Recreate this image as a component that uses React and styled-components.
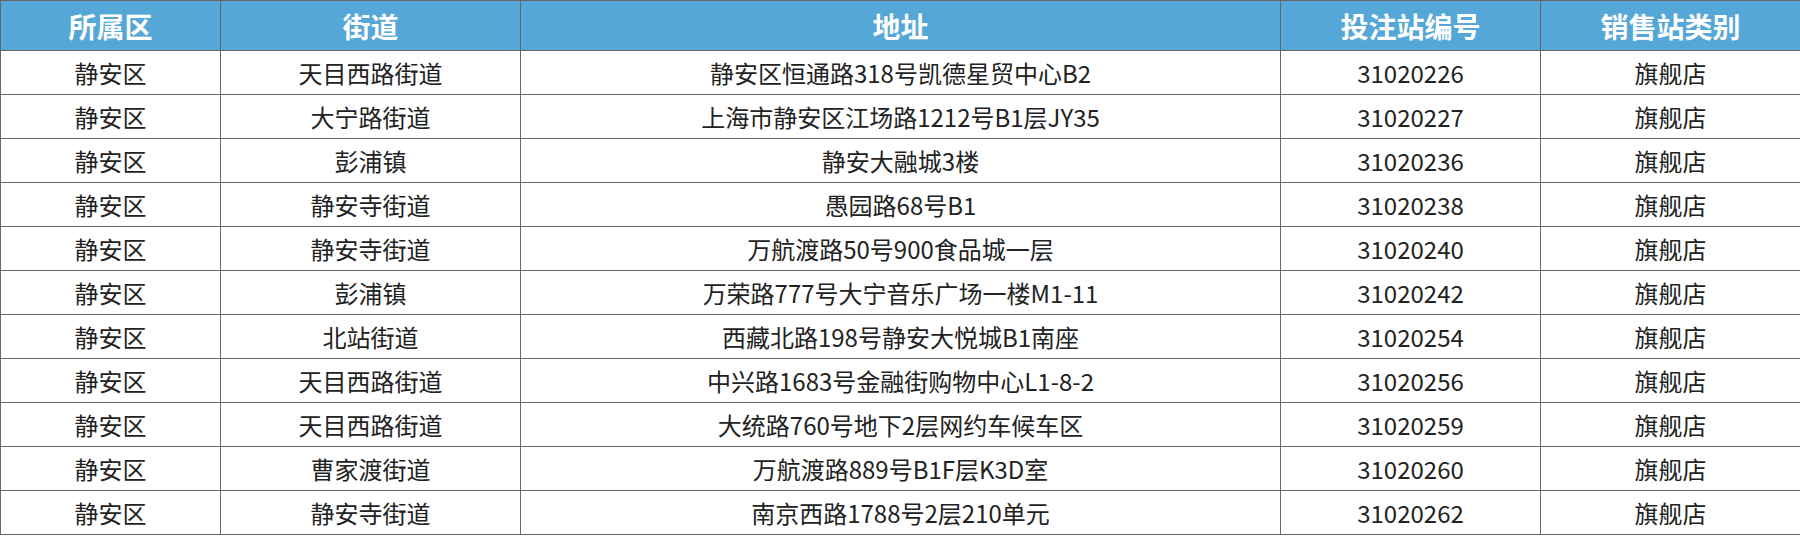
import styled, { createGlobalStyle } from "styled-components";

const GlobalStyle = createGlobalStyle`
  html, body {
    margin: 0;
    padding: 0;
    background: #ffffff;
  }
  body {
    font-family: "Noto Sans CJK SC", "Noto Sans", sans-serif;
  }
`;

const columns = [
  { key: "district", title: "所属区", width: 220 },
  { key: "street", title: "街道", width: 300 },
  { key: "address", title: "地址", width: 760 },
  { key: "code", title: "投注站编号", width: 260 },
  { key: "type", title: "销售站类别", width: 260 },
];

const rows = [
  ["静安区", "天目西路街道", "静安区恒通路318号凯德星贸中心B2", "31020226", "旗舰店"],
  ["静安区", "大宁路街道", "上海市静安区江场路1212号B1层JY35", "31020227", "旗舰店"],
  ["静安区", "彭浦镇", "静安大融城3楼", "31020236", "旗舰店"],
  ["静安区", "静安寺街道", "愚园路68号B1", "31020238", "旗舰店"],
  ["静安区", "静安寺街道", "万航渡路50号900食品城一层", "31020240", "旗舰店"],
  ["静安区", "彭浦镇", "万荣路777号大宁音乐广场一楼M1-11", "31020242", "旗舰店"],
  ["静安区", "北站街道", "西藏北路198号静安大悦城B1南座", "31020254", "旗舰店"],
  ["静安区", "天目西路街道", "中兴路1683号金融街购物中心L1-8-2", "31020256", "旗舰店"],
  ["静安区", "天目西路街道", "大统路760号地下2层网约车候车区", "31020259", "旗舰店"],
  ["静安区", "曹家渡街道", "万航渡路889号B1F层K3D室", "31020260", "旗舰店"],
  ["静安区", "静安寺街道", "南京西路1788号2层210单元", "31020262", "旗舰店"],
];

const Table = styled.table`
  width: 1800px;
  table-layout: fixed;
  border-collapse: collapse;
  border: 1px solid #676767;
`;

const HeadCell = styled.th`
  height: 49px;
  padding: 0;
  background: #55a7d7;
  color: #ffffff;
  font-size: 28px;
  font-weight: 700;
  text-align: center;
  vertical-align: middle;
  border: 1px solid #676767;
  line-height: 1;
`;

const Cell = styled.td`
  height: 43px;
  padding: 0;
  color: #222222;
  font-size: 24px;
  font-weight: 400;
  text-align: center;
  vertical-align: middle;
  border: 1px solid #676767;
  line-height: 1;
  white-space: nowrap;
`;

export default function App() {
  return (
    <>
      <GlobalStyle />
      <Table>
        <colgroup>
          {columns.map((c) => (
            <col key={c.key} style={{ width: c.width }} />
          ))}
        </colgroup>
        <thead>
          <tr>
            {columns.map((c) => (
              <HeadCell key={c.key}>{c.title}</HeadCell>
            ))}
          </tr>
        </thead>
        <tbody>
          {rows.map((r) => (
            <tr key={r[3]}>
              {r.map((v, i) => (
                <Cell key={i}>{v}</Cell>
              ))}
            </tr>
          ))}
        </tbody>
      </Table>
    </>
  );
}
